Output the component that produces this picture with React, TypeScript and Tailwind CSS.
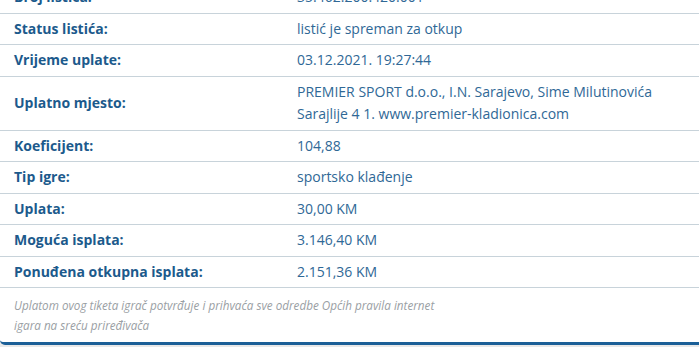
import React from "react";

const rows: { label: string; value: React.ReactNode }[] = [
  { label: "Broj listića:", value: "35.462.200.420.001" },
  { label: "Status listića:", value: "listić je spreman za otkup" },
  { label: "Vrijeme uplate:", value: "03.12.2021. 19:27:44" },
  {
    label: "Uplatno mjesto:",
    value: (
      <>
        PREMIER SPORT d.o.o., I.N. Sarajevo, Sime Milutinovića
        <br />
        Sarajlije 4 1. www.premier-kladionica.com
      </>
    ),
  },
  { label: "Koeficijent:", value: "104,88" },
  { label: "Tip igre:", value: "sportsko klađenje" },
  { label: "Uplata:", value: "30,00 KM" },
  { label: "Moguća isplata:", value: "3.146,40 KM" },
  { label: "Ponuđena otkupna isplata:", value: "2.151,36 KM" },
];

export default function App() {
  return (
    <div
      className="w-[699px] h-[347px] overflow-hidden bg-[#e8e8e8]"
      style={{ fontFamily: '"Open Sans", "Noto Sans", sans-serif' }}
    >
      <div className="bg-white border-b-[3px] border-[#1b5f97] rounded-bl-[5px] mt-[-18px]">
        {rows.map((r, i) => (
          <div
            key={i}
            className="flex items-center border-b border-[#c8d3da] text-[14px] leading-[22.5px] py-[4px]"
          >
            <div className="w-[297px] shrink-0 pl-[14px] font-bold text-[#1c5a8c]">
              {r.label}
            </div>
            <div className="text-[#2f6896]">{r.value}</div>
          </div>
        ))}
        <div className="px-[14px] pt-[7px] pb-[7px] text-[11.7px] leading-[20px] italic text-[#9aa0a4]">
          Uplatom ovog tiketa igrač potvrđuje i prihvaća sve odredbe Općih pravila internet
          <br />
          igara na sreću priređivača
        </div>
      </div>
    </div>
  );
}
